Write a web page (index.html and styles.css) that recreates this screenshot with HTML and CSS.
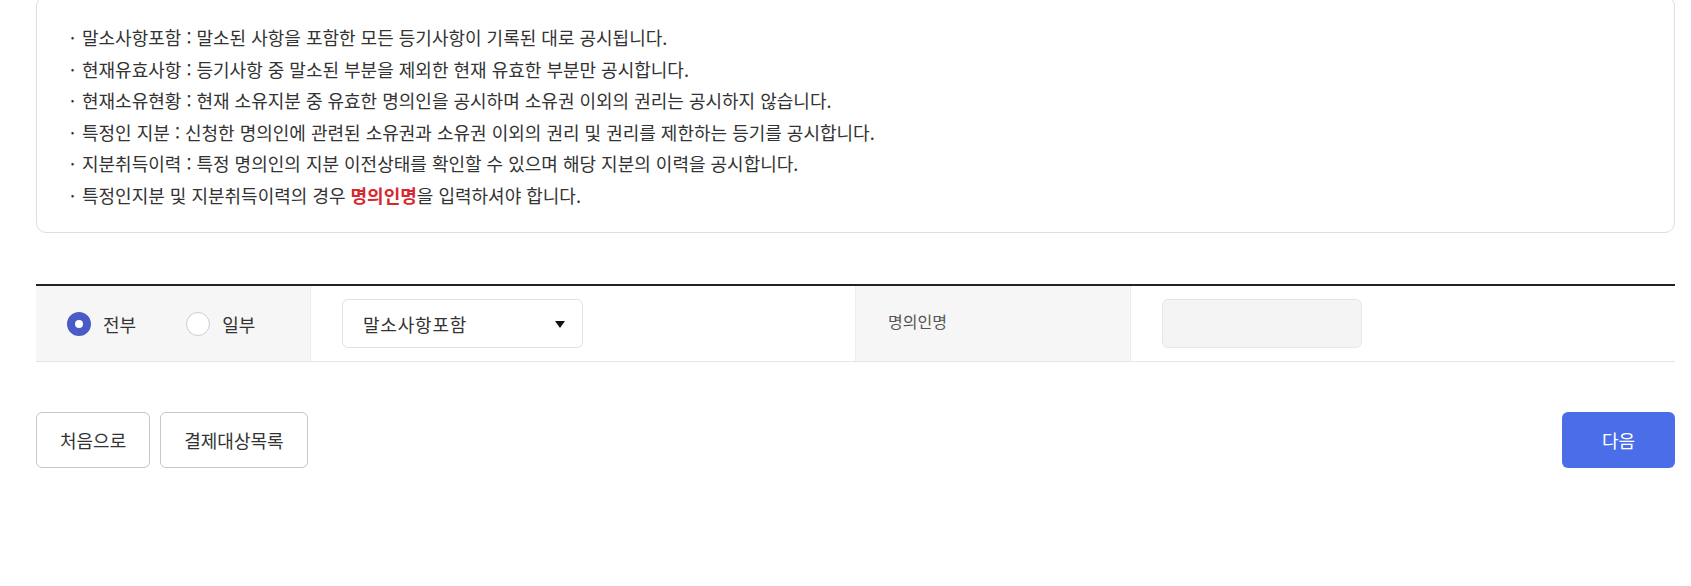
FILE: index.html
```html
<!DOCTYPE html>
<html lang="ko">
<head>
  <meta charset="UTF-8" />
  <meta name="viewport" content="width=device-width, initial-scale=1.0" />
  <title>열람 대상 선택</title>
  <link rel="stylesheet" href="styles.css">
</head>
<body>
  <div class="wrap">

    <!-- 안내 문구 -->
    <div class="notice-box">
      <ul class="notice-list">
        <li>말소사항포함 : 말소된 사항을 포함한 모든 등기사항이 기록된 대로 공시됩니다.</li>
        <li>현재유효사항 : 등기사항 중 말소된 부분을 제외한 현재 유효한 부분만 공시합니다.</li>
        <li>현재소유현황 : 현재 소유지분 중 유효한 명의인을 공시하며 소유권 이외의 권리는 공시하지 않습니다.</li>
        <li>특정인 지분 : 신청한 명의인에 관련된 소유권과 소유권 이외의 권리 및 권리를 제한하는 등기를 공시합니다.</li>
        <li>지분취득이력 : 특정 명의인의 지분 이전상태를 확인할 수 있으며 해당 지분의 이력을 공시합니다.</li>
        <li>특정인지분 및 지분취득이력의 경우 <strong class="point">명의인명</strong>을 입력하셔야 합니다.</li>
      </ul>
    </div>

    <!-- 선택 영역 -->
    <div class="option-row">
      <div class="cell cell-gray">
        <label class="radio">
          <input type="radio" name="range" checked>
          <span class="radio-mark"></span>
          <span>전부</span>
        </label>
        <label class="radio">
          <input type="radio" name="range">
          <span class="radio-mark"></span>
          <span>일부</span>
        </label>
      </div>
      <div class="cell">
        <div class="select-box">
          <span>말소사항포함</span>
          <span class="select-arrow"></span>
        </div>
      </div>
      <div class="cell cell-gray cell-label">명의인명</div>
      <div class="cell">
        <input type="text" class="name-input" disabled>
      </div>
    </div>

    <!-- 버튼 -->
    <div class="btn-area">
      <div class="btn-left">
        <button class="btn">처음으로</button>
        <button class="btn">결제대상목록</button>
      </div>
      <button class="btn btn-primary">다음</button>
    </div>

  </div>
</body>
</html>
```

FILE: styles.css
```css
body {
  margin: 0;
  padding: 0;
  background-color: #fff;
  color: #333;
  font-family: 'Noto Sans CJK KR', 'Noto Sans', sans-serif;
}

.wrap {
  padding: 0 16px 0 36px;
}

.notice-box {
  margin-top: -4px;
  border: 1px solid #dedede;
  border-radius: 10px;
  padding: 25px 0 21px;
}

.notice-list {
  list-style: none;
  margin: 0;
  padding: 0 0 0 33px;
  font-size: 18px;
  line-height: 31.5px;
}

.notice-list li::before {
  content: '·';
  display: inline-block;
  width: 12px;
}

.point {
  color: #d7282f;
  font-weight: bold;
}

.option-row {
  display: grid;
  grid-template-columns: 275px 544px 276px 1fr;
  height: 75px;
  margin-top: 51px;
  border-top: 2px solid #222;
  border-bottom: 1px solid #e6e6e6;
}

.cell {
  display: flex;
  align-items: center;
  padding-left: 31px;
}

.cell-gray {
  background-color: #f6f6f6;
  border-right: 1px solid #ececec;
}

.cell-label {
  border-left: 1px solid #ececec;
  padding-left: 32px;
  padding-bottom: 6px;
  font-size: 16px;
  color: #555;
}

.radio {
  display: flex;
  align-items: center;
  gap: 12px;
  margin-right: 50px;
  font-size: 18px;
  cursor: pointer;
}

.radio input {
  display: none;
}

.radio-mark {
  width: 24px;
  height: 24px;
  box-sizing: border-box;
  border: 1px solid #ccc;
  border-radius: 50%;
  background-color: #fff;
}

.radio input:checked + .radio-mark {
  border: 8px solid #4a5ac6;
}

.select-box {
  display: flex;
  align-items: center;
  justify-content: space-between;
  width: 241px;
  height: 49px;
  box-sizing: border-box;
  padding: 0 17px 0 20px;
  border: 1px solid #e2e2e2;
  border-radius: 6px;
  background-color: #fff;
  font-size: 18px;
  letter-spacing: 0.8px;
}

.select-arrow {
  width: 0;
  height: 0;
  border-left: 5.5px solid transparent;
  border-right: 5.5px solid transparent;
  border-top: 7px solid #111;
  margin-top: 2px;
}

.name-input {
  width: 200px;
  height: 49px;
  box-sizing: border-box;
  border: 1px solid #e6e6e6;
  border-radius: 6px;
  background-color: #f4f4f4;
}

.btn-area {
  display: flex;
  justify-content: space-between;
  margin-top: 50px;
}

.btn-left {
  display: flex;
  gap: 10px;
}

.btn {
  height: 56px;
  padding: 0 23px;
  border: 1px solid #c6c6c6;
  border-radius: 6px;
  background-color: #fff;
  color: #333;
  font-size: 18px;
  font-family: 'Noto Sans CJK KR', 'Noto Sans', sans-serif;
  cursor: pointer;
}

.btn-primary {
  width: 113px;
  border: none;
  background-color: #4a6ee8;
  color: #fff;
}
```
